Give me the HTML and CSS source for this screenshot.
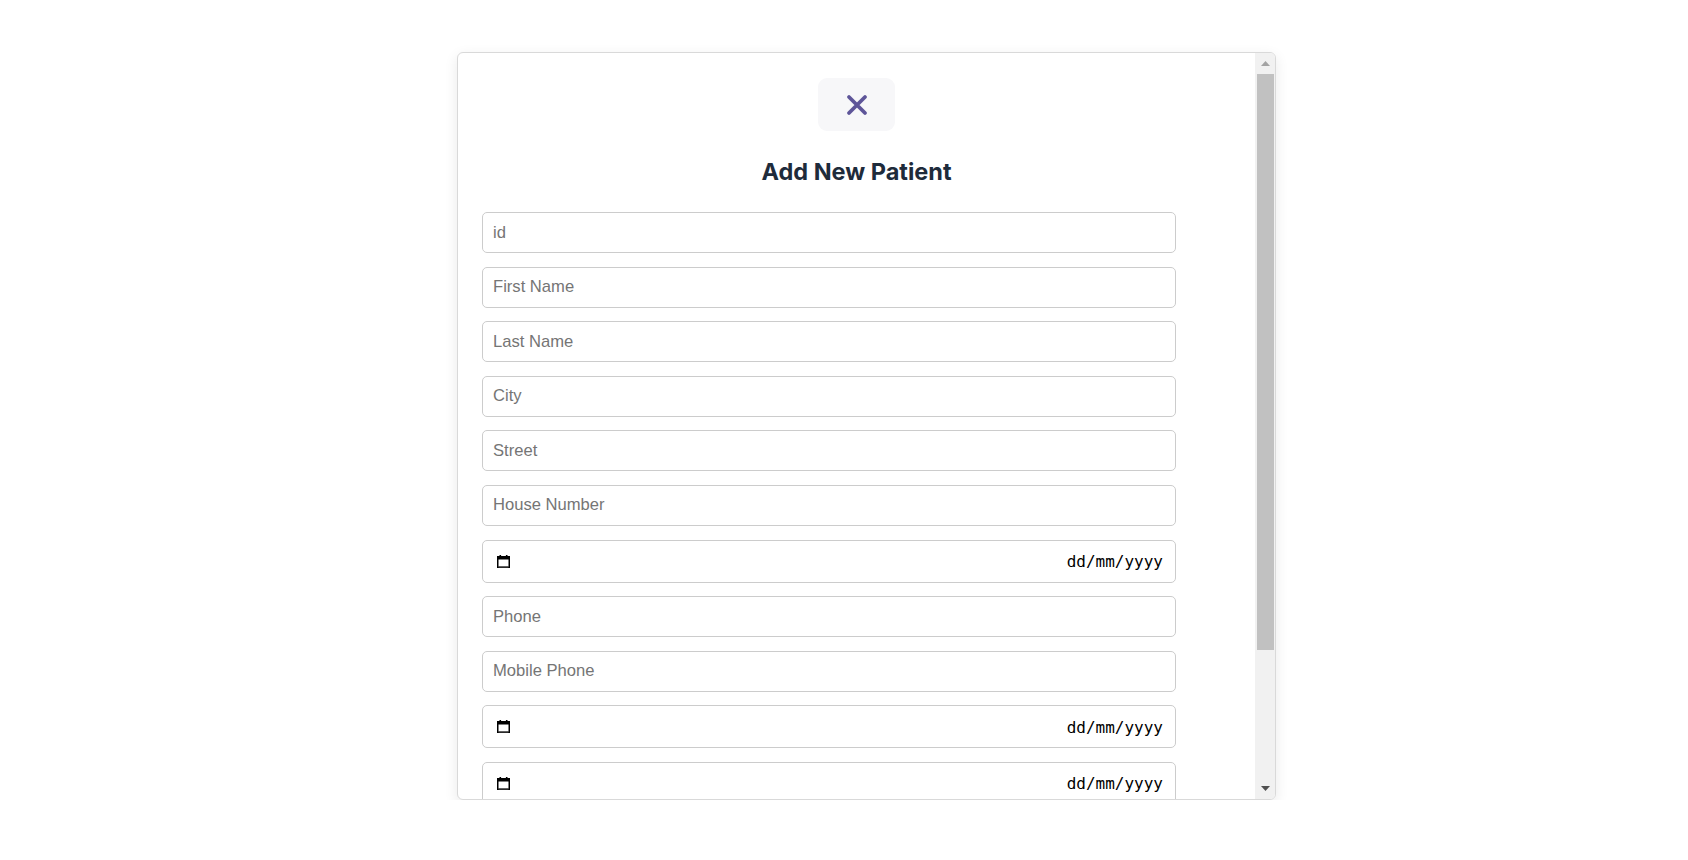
FILE: index.html
```html
<!DOCTYPE html>
<html lang="en-GB">
<head>
<meta charset="utf-8">
<title>Add New Patient</title>
<link rel="stylesheet" href="styles.css">
</head>
<body>
<div class="page">
  <div class="modal">
    <div class="modal-body">
      <div class="modal-head">
        <button class="close-btn" type="button" aria-label="Close">
          <svg width="24" height="24" viewBox="0 0 24 24" aria-hidden="true">
            <path d="M4 4L20 20M20 4L4 20" stroke="#5e5599" stroke-width="3.8" stroke-linecap="round"/>
          </svg>
        </button>
        <h2 class="title">Add New Patient</h2>
      </div>
      <form class="form">
        <input class="field" type="text" placeholder="id">
        <input class="field" type="text" placeholder="First Name">
        <input class="field" type="text" placeholder="Last Name">
        <input class="field" type="text" placeholder="City">
        <input class="field" type="text" placeholder="Street">
        <input class="field" type="text" placeholder="House Number">
        <div class="field date-field" role="textbox" aria-label="Date of birth">
          <svg class="cal" width="13" height="13" viewBox="0 0 13 13" aria-hidden="true">
            <rect x="2.5" y="0" width="1.6" height="2.5" fill="#000"/>
            <rect x="8.9" y="0" width="1.6" height="2.5" fill="#000"/>
            <rect x="0.75" y="1.75" width="11.5" height="10.5" fill="none" stroke="#000" stroke-width="1.5"/>
            <rect x="0" y="1.5" width="13" height="3" fill="#000"/>
            <rect x="1.5" y="11.3" width="10" height="1.2" fill="#555"/>
          </svg>
          <span class="date-text">dd/mm/yyyy</span>
        </div>
        <input class="field" type="text" placeholder="Phone">
        <input class="field" type="text" placeholder="Mobile Phone">
        <div class="field date-field" role="textbox" aria-label="Start date">
          <svg class="cal" width="13" height="13" viewBox="0 0 13 13" aria-hidden="true">
            <rect x="2.5" y="0" width="1.6" height="2.5" fill="#000"/>
            <rect x="8.9" y="0" width="1.6" height="2.5" fill="#000"/>
            <rect x="0.75" y="1.75" width="11.5" height="10.5" fill="none" stroke="#000" stroke-width="1.5"/>
            <rect x="0" y="1.5" width="13" height="3" fill="#000"/>
            <rect x="1.5" y="11.3" width="10" height="1.2" fill="#555"/>
          </svg>
          <span class="date-text">dd/mm/yyyy</span>
        </div>
        <div class="field date-field" role="textbox" aria-label="End date">
          <svg class="cal" width="13" height="13" viewBox="0 0 13 13" aria-hidden="true">
            <rect x="2.5" y="0" width="1.6" height="2.5" fill="#000"/>
            <rect x="8.9" y="0" width="1.6" height="2.5" fill="#000"/>
            <rect x="0.75" y="1.75" width="11.5" height="10.5" fill="none" stroke="#000" stroke-width="1.5"/>
            <rect x="0" y="1.5" width="13" height="3" fill="#000"/>
            <rect x="1.5" y="11.3" width="10" height="1.2" fill="#555"/>
          </svg>
          <span class="date-text">dd/mm/yyyy</span>
        </div>
      </form>
    </div>
    <div class="scrollbar" aria-hidden="true">
      <div class="sb-btn">
        <svg width="9" height="5" viewBox="0 0 9 5"><path d="M0 5L4.5 0L9 5z" fill="#a3a3a3"/></svg>
      </div>
      <div class="sb-thumb"></div>
      <div class="sb-rest"></div>
      <div class="sb-btn">
        <svg width="9" height="5" viewBox="0 0 9 5"><path d="M0 0L4.5 5L9 0z" fill="#505050"/></svg>
      </div>
    </div>
  </div>
</div>
</body>
</html>
```
FILE: styles.css
```css
html, body {
  margin: 0;
  padding: 0;
  background: #ffffff;
}
body {
  font-family: "Liberation Sans", Arial, sans-serif;
}
.page {
  padding: 52px 0 0 457px;
}
.modal {
  box-sizing: border-box;
  width: 819px;
  height: 748px;
  display: flex;
  background: #fff;
  border: 1px solid #d9d9d9;
  border-radius: 6px;
  box-shadow: 0 4px 14px rgba(0, 0, 0, 0.09);
  overflow: hidden;
}
.modal-body {
  flex: 1;
  min-width: 0;
  overflow: hidden;
}
.scrollbar {
  width: 20px;
  flex: none;
  display: flex;
  flex-direction: column;
  background: #f1f1f1;
}
.sb-btn {
  height: 21px;
  flex: none;
  display: flex;
  align-items: center;
  justify-content: center;
  padding-left: 1px;
}
.sb-thumb {
  height: 576px;
  flex: none;
  margin: 0 1px 0 2px;
  background: #c1c1c1;
}
.sb-rest {
  flex: 1;
}
.modal-head {
  display: flex;
  flex-direction: column;
  align-items: center;
  padding-top: 25px;
}
.close-btn {
  width: 77px;
  height: 53px;
  border: none;
  border-radius: 9px;
  background: #f7f7f9;
  display: flex;
  align-items: center;
  justify-content: center;
  padding: 0;
  cursor: pointer;
}
.title {
  margin: 27px 0 26px;
  font-family: Inter, "Noto Sans", sans-serif;
  font-weight: 700;
  font-size: 23.5px;
  line-height: 28px;
  color: #1e2b3b;
}
.form {
  display: flex;
  flex-direction: column;
  align-items: flex-start;
  gap: 13.6px;
  padding: 0 0 60px 24px;
}
.field {
  box-sizing: border-box;
  width: 694px;
  height: 41px;
  margin: 0;
  padding: 0 10px;
  border: 1px solid #cccccc;
  border-radius: 5px;
  font-family: "Liberation Sans", Arial, sans-serif;
  font-size: 16.6px;
  color: #222;
  background: #fff;
  outline: none;
  flex: none;
}
.field::placeholder {
  color: #757575;
}
.date-field {
  height: 43px;
  display: flex;
  align-items: center;
  justify-content: space-between;
  padding: 0 12px 0 14px;
}
.cal {
  display: block;
}
.date-text {
  font-family: "DejaVu Sans Mono", "Liberation Mono", monospace;
  font-size: 16px;
  color: #000;
  padding-top: 1px;
}
```
